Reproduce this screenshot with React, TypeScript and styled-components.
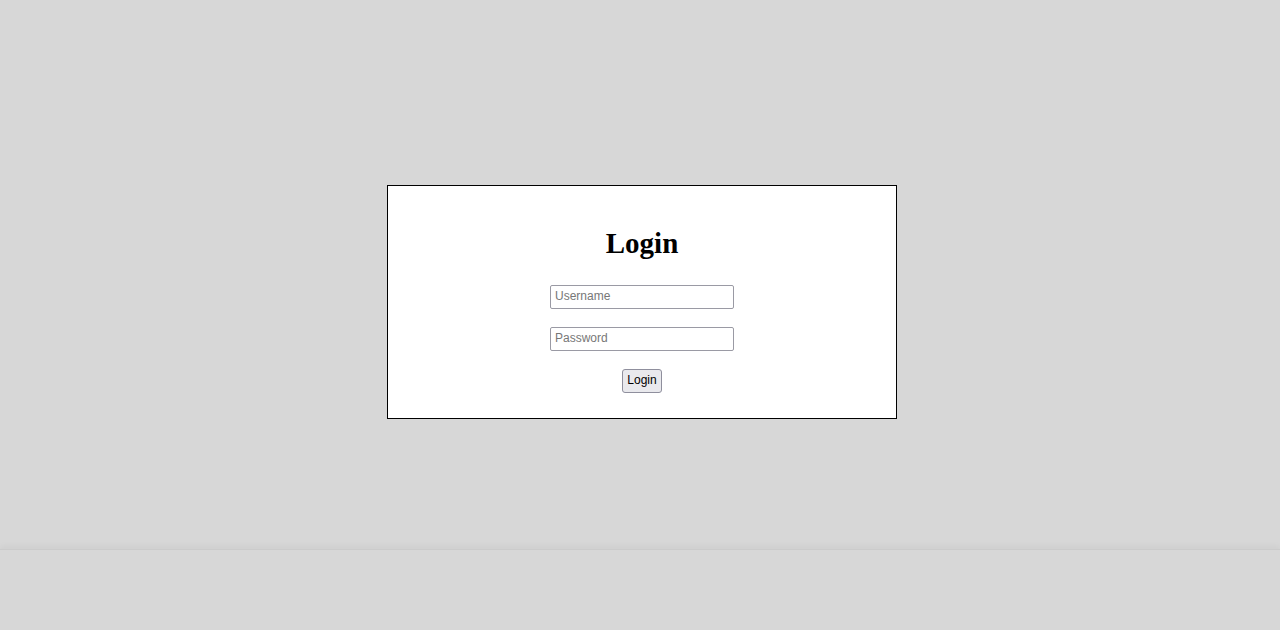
import React from 'react';
import styled, { createGlobalStyle } from 'styled-components';

const GlobalStyle = createGlobalStyle`
  html, body {
    margin: 0;
    padding: 0;
    background: #d7d7d7;
  }
  body {
    font-family: "Liberation Sans", Arial, sans-serif;
  }
`;

const App: React.FC = () => {
  return (
    <>
      <GlobalStyle />
      <Page>
        <Main>
          <LoginBox onSubmit={(e) => e.preventDefault()}>
            <Title>Login</Title>
            <Field type="text" placeholder="Username" />
            <Field type="password" placeholder="Password" />
            <LoginButton type="submit">Login</LoginButton>
          </LoginBox>
        </Main>
        <Footer />
      </Page>
    </>
  );
};

export default App;

const Page = styled.div`
  display: flex;
  flex-direction: column;
  min-height: 630px;
  background: #d7d7d7;
`;

const Main = styled.main`
  height: 549px;
  display: flex;
  justify-content: center;
  align-items: flex-start;
  padding: 185px 0 0 4px;
  box-sizing: border-box;
`;

const LoginBox = styled.form`
  width: 510px;
  box-sizing: border-box;
  border: 1px solid #000;
  background: #fff;
  padding: 40px 0 25px;
  display: flex;
  flex-direction: column;
  align-items: center;
  gap: 18px;
`;

const Title = styled.h1`
  margin: 1px 0 7px;
  font-family: "Liberation Serif", "Times New Roman", serif;
  font-weight: 700;
  font-size: 29px;
  line-height: 33px;
  color: #000;
`;

const Field = styled.input`
  width: 184px;
  height: 24px;
  box-sizing: border-box;
  padding: 0 4px 2px;
  border: 1px solid #9a9aa4;
  border-radius: 2px;
  font-family: "Liberation Sans", Arial, sans-serif;
  font-size: 12px;
  color: #000;
  background: #fff;
  outline: none;

  &::placeholder {
    color: #777;
  }
`;

const LoginButton = styled.button`
  height: 24px;
  box-sizing: border-box;
  padding: 0 4px 2px;
  border: 1px solid #8f8f9d;
  border-radius: 3px;
  background: #e9e9ed;
  font-family: "Liberation Sans", Arial, sans-serif;
  font-size: 12px;
  color: #000;
  cursor: pointer;
`;

const Footer = styled.footer`
  flex: 1;
  border-top: 1px solid #cbcbcb;
  background: #d7d7d7;
  box-shadow: 0 -3px 6px rgba(0, 0, 0, 0.04);
`;
